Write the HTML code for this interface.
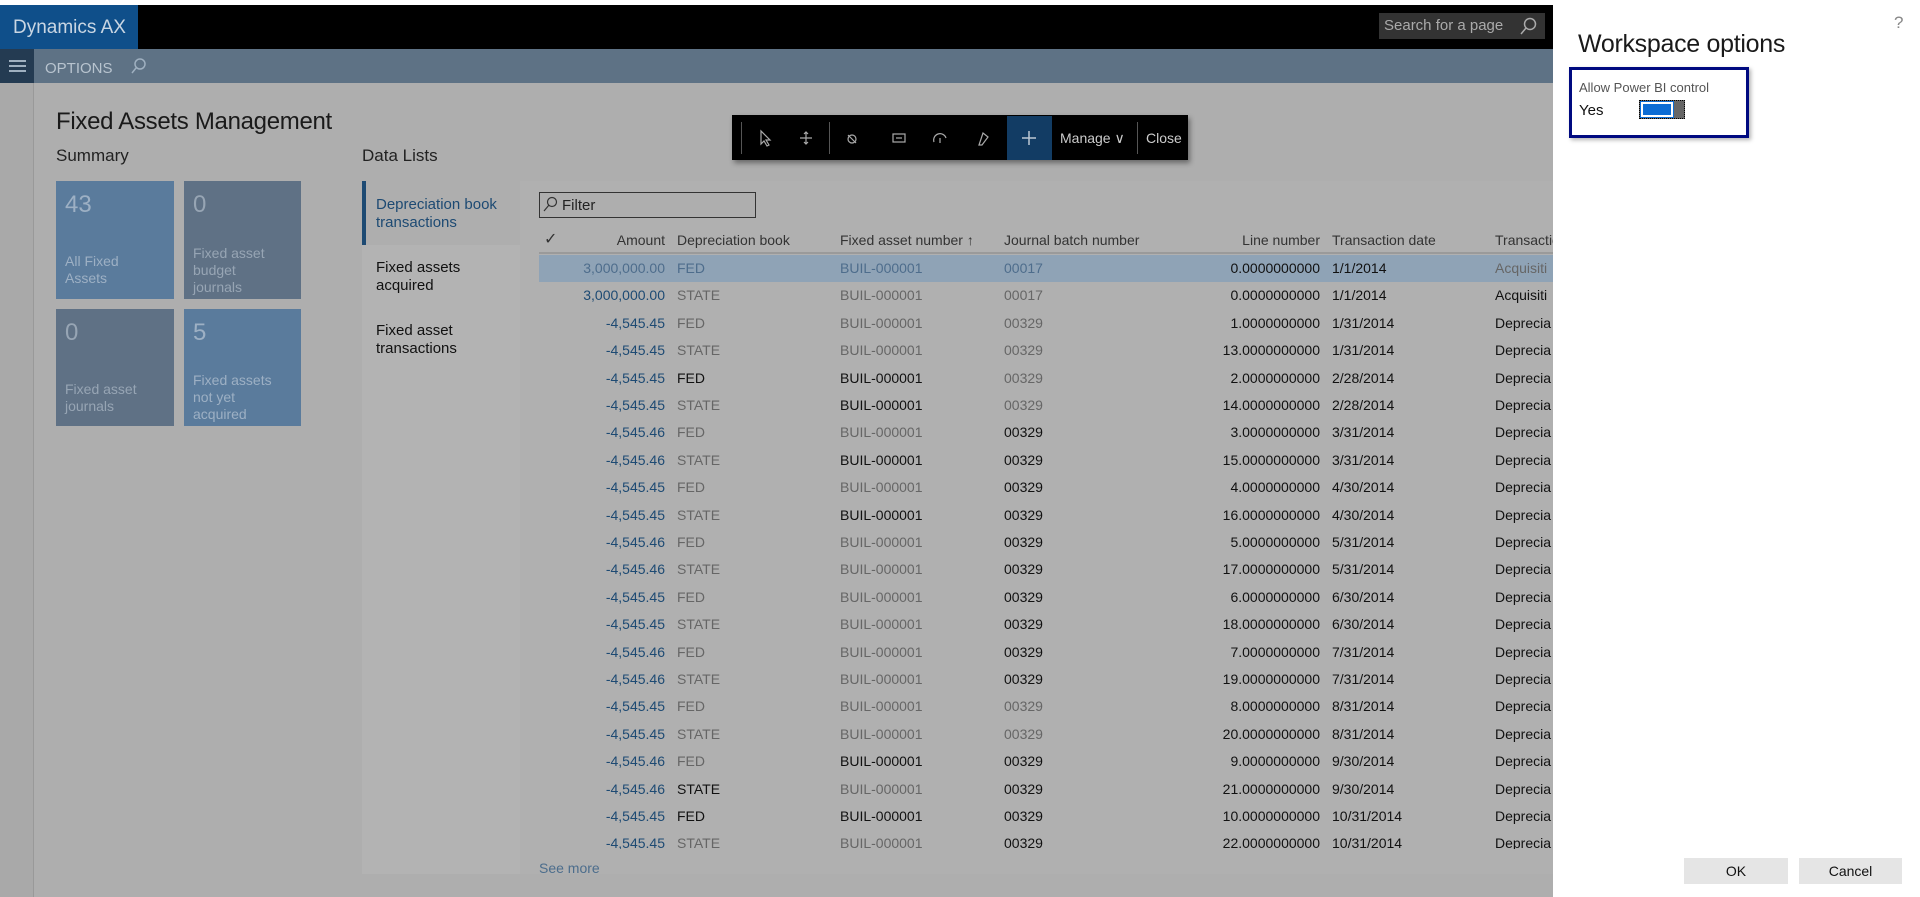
<!DOCTYPE html>
<html><head><meta charset="utf-8"><style>
*{margin:0;padding:0;box-sizing:border-box}
body{width:1920px;height:897px;overflow:hidden;background:#aeaeae;font-family:"Liberation Sans",sans-serif;position:relative;color:#111}
.a{position:absolute;white-space:nowrap}
.row{position:absolute;left:539px;width:1014px;height:27px;font-size:14px}
.row span{position:absolute;top:5px}
.g{color:#666}.k{color:#111}.b{color:#1d4a73}
</style></head><body>
<div class="a" style="left:0;top:0;width:1920px;height:5px;background:#fff"></div>
<div class="a" style="left:0;top:5px;width:1553px;height:44px;background:#000"></div>
<div class="a" style="left:0;top:5px;width:138px;height:44px;background:#0f4f8a;color:#c9d6e3;font-size:19px;padding:12px 0 0 13px">Dynamics AX</div>
<div class="a" style="left:1379px;top:13px;width:166px;height:26px;background:#333;color:#aaa;font-size:15px;padding:4px 0 0 5px">Search for a page</div>
<svg class="a" style="left:1518px;top:16px" width="20" height="20"><circle cx="12" cy="8" r="5.5" fill="none" stroke="#aaa" stroke-width="1.5"/><line x1="8" y1="12" x2="3" y2="18" stroke="#aaa" stroke-width="1.5"/></svg>
<div class="a" style="left:0;top:49px;width:1553px;height:34px;background:#5e7285"></div>
<div class="a" style="left:0;top:49px;width:34px;height:34px;background:#243b52"></div>
<div class="a" style="left:9px;top:60px;width:17px;height:2px;background:#9fb0c0;box-shadow:0 5px #9fb0c0,0 10px #9fb0c0"></div>
<div class="a" style="left:45px;top:60px;color:#b8c4cf;font-size:15px">OPTIONS</div>
<svg class="a" style="left:128px;top:56px" width="20" height="20"><circle cx="12" cy="8" r="5" fill="none" stroke="#9fb0c0" stroke-width="1.5"/><line x1="8" y1="12" x2="4" y2="17" stroke="#9fb0c0" stroke-width="1.5"/></svg>
<div class="a" style="left:0;top:83px;width:34px;height:814px;background:#a9a9a9;border-right:1px solid #999"></div>
<div class="a" style="left:56px;top:108px;font-size:24px;color:#1a1a1a;letter-spacing:-0.3px">Fixed Assets Management</div>
<div class="a" style="left:56px;top:146px;font-size:17px;color:#222">Summary</div>
<div class="a" style="left:362px;top:146px;font-size:17px;color:#222">Data Lists</div>
<div class="a" style="left:56px;top:181px;width:118px;height:118px;background:#5a7b9c"></div>
<div class="a" style="left:184px;top:181px;width:117px;height:118px;background:#5f7185"></div>
<div class="a" style="left:56px;top:309px;width:118px;height:117px;background:#5f7185"></div>
<div class="a" style="left:184px;top:309px;width:117px;height:117px;background:#5a7b9c"></div>
<div class="a" style="left:65px;top:191px;font-size:24px;color:#9db0c4">43</div>
<div class="a" style="left:65px;top:253px;font-size:14px;color:#9db0c4;line-height:17px;white-space:normal;width:60px">All Fixed Assets</div>
<div class="a" style="left:193px;top:191px;font-size:24px;color:#97a5b4">0</div>
<div class="a" style="left:193px;top:245px;font-size:14px;color:#97a5b4;line-height:17px;white-space:normal;width:90px">Fixed asset budget journals</div>
<div class="a" style="left:65px;top:319px;font-size:24px;color:#97a5b4">0</div>
<div class="a" style="left:65px;top:381px;font-size:14px;color:#97a5b4;line-height:17px;white-space:normal;width:100px">Fixed asset journals</div>
<div class="a" style="left:193px;top:319px;font-size:24px;color:#9db0c4">5</div>
<div class="a" style="left:193px;top:372px;font-size:14px;color:#9db0c4;line-height:17px;white-space:normal;width:90px">Fixed assets not yet acquired</div>
<div class="a" style="left:362px;top:181px;width:158px;height:693px;background:#b3b3b3"></div>
<div class="a" style="left:520px;top:181px;width:1033px;height:693px;background:#b0b0b0"></div>
<div class="a" style="left:362px;top:181px;width:158px;height:64px;background:#aeaeae;border-left:4px solid #1d4a73"></div>
<div class="a" style="left:376px;top:196px;font-size:15px;color:#1d4a73;line-height:18px">Depreciation book<br>transactions</div>
<div class="a" style="left:376px;top:259px;font-size:15px;line-height:18px">Fixed assets<br>acquired</div>
<div class="a" style="left:376px;top:322px;font-size:15px;line-height:18px">Fixed asset<br>transactions</div>
<div class="a" style="left:539px;top:192px;width:217px;height:26px;border:1px solid #333;background:#aeaeae;font-size:15px;padding:4px 0 0 22px;color:#222">Filter</div>
<svg class="a" style="left:541px;top:195px" width="18" height="18"><circle cx="11" cy="7" r="4.5" fill="none" stroke="#333" stroke-width="1.2"/><line x1="8" y1="10" x2="3" y2="16" stroke="#333" stroke-width="1.2"/></svg>
<div class="a" style="left:539px;top:226px;width:1014px;height:28px;font-size:14px;color:#333;border-bottom:2px solid #9a9a9a">
<span class="a" style="left:5px;top:3px;font-size:16px">✓</span>
<span class="a" style="right:888px;top:6px">Amount</span>
<span class="a" style="left:138px;top:6px">Depreciation book</span>
<span class="a" style="left:301px;top:6px">Fixed asset number ↑</span>
<span class="a" style="left:465px;top:6px">Journal batch number</span>
<span class="a" style="right:233px;top:6px">Line number</span>
<span class="a" style="left:793px;top:6px">Transaction date</span>
<span class="a" style="left:956px;top:6px">Transactio</span>
</div>
<div id="rows"></div>
<div class="a" style="left:539px;top:860px;font-size:14px;color:#4c6d8c">See more</div>
<!-- toolbar -->
<div class="a" style="left:732px;top:115px;width:456px;height:45px;background:#000;box-shadow:2px 3px 5px rgba(0,0,0,.4)"></div>
<div class="a" style="left:741px;top:122px;width:1px;height:32px;background:#555"></div>
<div class="a" style="left:829px;top:122px;width:1px;height:32px;background:#555"></div>
<div class="a" style="left:1007px;top:116px;width:45px;height:44px;background:#123c64"></div>
<svg class="a" style="left:1020px;top:129px" width="18" height="18"><path d="M9 2 V16 M2 9 H16" stroke="#bcc8d4" stroke-width="1.5"/></svg>
<div class="a" style="left:1060px;top:130px;font-size:14px;color:#ccc">Manage ∨</div>
<div class="a" style="left:1137px;top:122px;width:1px;height:32px;background:#555"></div>
<div class="a" style="left:1146px;top:130px;font-size:14px;color:#ccc">Close</div>
<svg class="a" style="left:756px;top:128px" width="240" height="20" fill="none" stroke="#aaa" stroke-width="1.2">
<path d="M5 3 L5 16 L8 13 L11 18 L13 17 L10 12 L14 12 Z"/>
<path d="M50 4 V16 M44 10 H56 M48 6 L50 4 L52 6 M48 14 L50 16 L52 14"/>
<circle cx="96" cy="11" r="4"/><path d="M92 7 L100 15"/>
<rect x="137" y="6" width="12" height="8"/><path d="M140 10 H146"/>
<path d="M178 14 A6 6 0 0 1 190 10 M184 10 V15"/>
<path d="M223 17 L227 5 L232 9 L226 17 Z"/>
</svg>
<!-- right panel -->
<div class="a" style="left:1553px;top:5px;width:367px;height:892px;background:#fff"></div>
<div class="a" style="left:1894px;top:13px;font-size:17px;color:#888">?</div>
<div class="a" style="left:1578px;top:30px;font-size:25px;color:#1a1a1a;letter-spacing:-0.3px">Workspace options</div>
<div class="a" style="left:1569px;top:67px;width:180px;height:71px;border:3px solid #000a80;box-shadow:2px 2px 4px rgba(0,0,0,.3)"></div>
<div class="a" style="left:1579px;top:80px;font-size:13px;color:#555">Allow Power BI control</div>
<div class="a" style="left:1579px;top:102px;font-size:15px;color:#111">Yes</div>
<div class="a" style="left:1639px;top:100px;width:46px;height:19px;background:#666;border:1px dotted #000"></div>
<div class="a" style="left:1641px;top:102px;width:32px;height:15px;background:#0c6cd4;border:2px solid #fff;outline:1px solid #0c6cd4"></div>
<div class="a" style="left:1684px;top:858px;width:104px;height:26px;background:#e5e5e5;font-size:14px;text-align:center;padding-top:5px">OK</div>
<div class="a" style="left:1799px;top:858px;width:103px;height:26px;background:#e5e5e5;font-size:14px;text-align:center;padding-top:5px">Cancel</div>
<script>
var d=[
["3,000,000.00","FED","BUIL-000001","00017","0.0000000000","1/1/2014","Acquisiti","g","g","g"],
["3,000,000.00","STATE","BUIL-000001","00017","0.0000000000","1/1/2014","Acquisiti","g","g","g"],
["-4,545.45","FED","BUIL-000001","00329","1.0000000000","1/31/2014","Deprecia","g","g","g"],
["-4,545.45","STATE","BUIL-000001","00329","13.0000000000","1/31/2014","Deprecia","g","g","g"],
["-4,545.45","FED","BUIL-000001","00329","2.0000000000","2/28/2014","Deprecia","k","k","g"],
["-4,545.45","STATE","BUIL-000001","00329","14.0000000000","2/28/2014","Deprecia","g","k","g"],
["-4,545.46","FED","BUIL-000001","00329","3.0000000000","3/31/2014","Deprecia","g","g","k"],
["-4,545.46","STATE","BUIL-000001","00329","15.0000000000","3/31/2014","Deprecia","g","k","k"],
["-4,545.45","FED","BUIL-000001","00329","4.0000000000","4/30/2014","Deprecia","g","g","k"],
["-4,545.45","STATE","BUIL-000001","00329","16.0000000000","4/30/2014","Deprecia","g","k","k"],
["-4,545.46","FED","BUIL-000001","00329","5.0000000000","5/31/2014","Deprecia","g","g","k"],
["-4,545.46","STATE","BUIL-000001","00329","17.0000000000","5/31/2014","Deprecia","g","g","k"],
["-4,545.45","FED","BUIL-000001","00329","6.0000000000","6/30/2014","Deprecia","g","g","k"],
["-4,545.45","STATE","BUIL-000001","00329","18.0000000000","6/30/2014","Deprecia","g","g","k"],
["-4,545.46","FED","BUIL-000001","00329","7.0000000000","7/31/2014","Deprecia","g","g","k"],
["-4,545.46","STATE","BUIL-000001","00329","19.0000000000","7/31/2014","Deprecia","g","g","k"],
["-4,545.45","FED","BUIL-000001","00329","8.0000000000","8/31/2014","Deprecia","g","g","g"],
["-4,545.45","STATE","BUIL-000001","00329","20.0000000000","8/31/2014","Deprecia","g","g","g"],
["-4,545.46","FED","BUIL-000001","00329","9.0000000000","9/30/2014","Deprecia","g","k","k"],
["-4,545.46","STATE","BUIL-000001","00329","21.0000000000","9/30/2014","Deprecia","k","g","k"],
["-4,545.45","FED","BUIL-000001","00329","10.0000000000","10/31/2014","Deprecia","k","k","k"],
["-4,545.45","STATE","BUIL-000001","00329","22.0000000000","10/31/2014","Deprecia","g","g","k"]];
var h='';
d.forEach(function(r,i){var top=255+i*27.4;var hh=i==21?(849-top):27;
h+='<div class="row" style="top:'+top+'px;height:'+hh+'px;overflow:hidden;'+(i==0?'background:#8fa3b6;':'')+'">'+
'<span class="'+(i==0?'':'b')+'" style="right:888px;'+(i==0?'color:#4e6d8c':'')+'">'+r[0]+'</span>'+
'<span class="'+r[7]+'" style="left:138px;'+(i==0?'color:#4e6d8c':'')+'">'+r[1]+'</span>'+
'<span class="'+r[8]+'" style="left:301px;'+(i==0?'color:#4e6d8c':'')+'">'+r[2]+'</span>'+
'<span class="'+r[9]+'" style="left:465px;'+(i==0?'color:#4e6d8c':'')+'">'+r[3]+'</span>'+
'<span class="k" style="right:233px">'+r[4]+'</span>'+
'<span class="k" style="left:793px">'+r[5]+'</span>'+
'<span class="'+(i==0?'g':'k')+'" style="left:956px">'+r[6]+'</span></div>';});
document.getElementById('rows').innerHTML=h;
</script>
</body></html>
